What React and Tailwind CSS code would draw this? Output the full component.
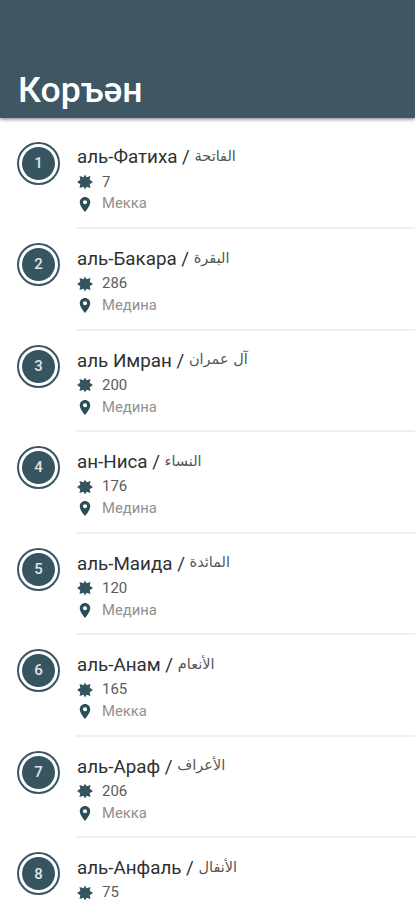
import React from 'react';

const SURAHS = [
  { number: 1, title: 'аль-Фатиха', arabic: 'الفاتحة', verses: 7, place: 'Мекка' },
  { number: 2, title: 'аль-Бакара', arabic: 'البقرة', verses: 286, place: 'Медина' },
  { number: 3, title: 'аль Имран', arabic: 'آل عمران', verses: 200, place: 'Медина' },
  { number: 4, title: 'ан-Ниса', arabic: 'النساء', verses: 176, place: 'Медина' },
  { number: 5, title: 'аль-Маида', arabic: 'المائدة', verses: 120, place: 'Медина' },
  { number: 6, title: 'аль-Анам', arabic: 'الأنعام', verses: 165, place: 'Мекка' },
  { number: 7, title: 'аль-Араф', arabic: 'الأعراف', verses: 206, place: 'Мекка' },
  { number: 8, title: 'аль-Анфаль', arabic: 'الأنفال', verses: 75 },
];

const VerseIcon = () => (
  <svg viewBox="0 0 16 16" className="mt-px w-4 h-4 fill-[#34545f]">
    <path d="M8 .4 L9.5 3.2 L13.5 1.9 L12.7 5.8 L16 8 L12.7 10.2 L13.5 14.1 L9.5 12.8 L8 15.6 L6.5 12.8 L2.5 14.1 L3.3 10.2 L0 8 L3.3 5.8 L2.5 1.9 L6.5 3.2 Z" />
  </svg>
);

const PlaceIcon = () => (
  <svg viewBox="5 2 14 20" className="mt-px w-4 h-[15px] fill-[#2b4d58]">
    <path d="M12 2C8.13 2 5 5.13 5 9c0 5.25 7 13 7 13s7-7.75 7-13c0-3.87-3.13-7-7-7zm0 9.8a2.8 2.8 0 0 1 0-5.6 2.8 2.8 0 0 1 0 5.6z" />
  </svg>
);

const SurahRow = ({ surah }) => (
  <li className="flex h-[101.55px] pl-[17px]">
    <div className="mt-[14px] h-[43px] w-[43px] shrink-0 rounded-full border-2 border-[#3b5662] p-[3px]">
      <div className="flex h-full w-full items-center justify-center rounded-full bg-[#375560] text-[15px] font-medium text-[#dfe6e9]">
        {surah.number}
      </div>
    </div>
    <div className="ml-4 flex-1 border-b-2 border-[#efefef] pt-[17px] pl-px">
      <h2 className="flex h-[26px] items-center whitespace-pre text-[18.8px] text-[#303030]">
        <span>{surah.title} / </span>
        <span dir="rtl" className="pb-px font-['DejaVu_Sans',sans-serif] text-[14.5px] text-[#555]">{surah.arabic}</span>
      </h2>
      <div className="flex h-[22px] items-center gap-[9px] text-[15px] leading-4 text-[#5c5c5c]">
        <VerseIcon />
        <span>{surah.verses}</span>
      </div>
      {surah.place && (
        <div className="flex h-[22px] items-center gap-[9px] text-[14.8px] text-[#909090]">
          <PlaceIcon />
          <span>{surah.place}</span>
        </div>
      )}
    </div>
  </li>
);

const App = () => (
  <div className="h-[900px] overflow-hidden bg-white font-['Roboto',sans-serif]">
    <header className="relative flex h-[118px] items-end bg-[#3e5762] pb-[7px] pl-[18px] shadow-[0_1px_4px_rgba(0,0,0,0.55)]">
      <h1 className="text-[35.6px] leading-[42px] font-medium text-white">Коръән</h1>
    </header>
    <ul className="pt-[9.5px]">
      {SURAHS.map((surah) => (
        <SurahRow key={surah.number} surah={surah} />
      ))}
    </ul>
  </div>
);

export default App;
